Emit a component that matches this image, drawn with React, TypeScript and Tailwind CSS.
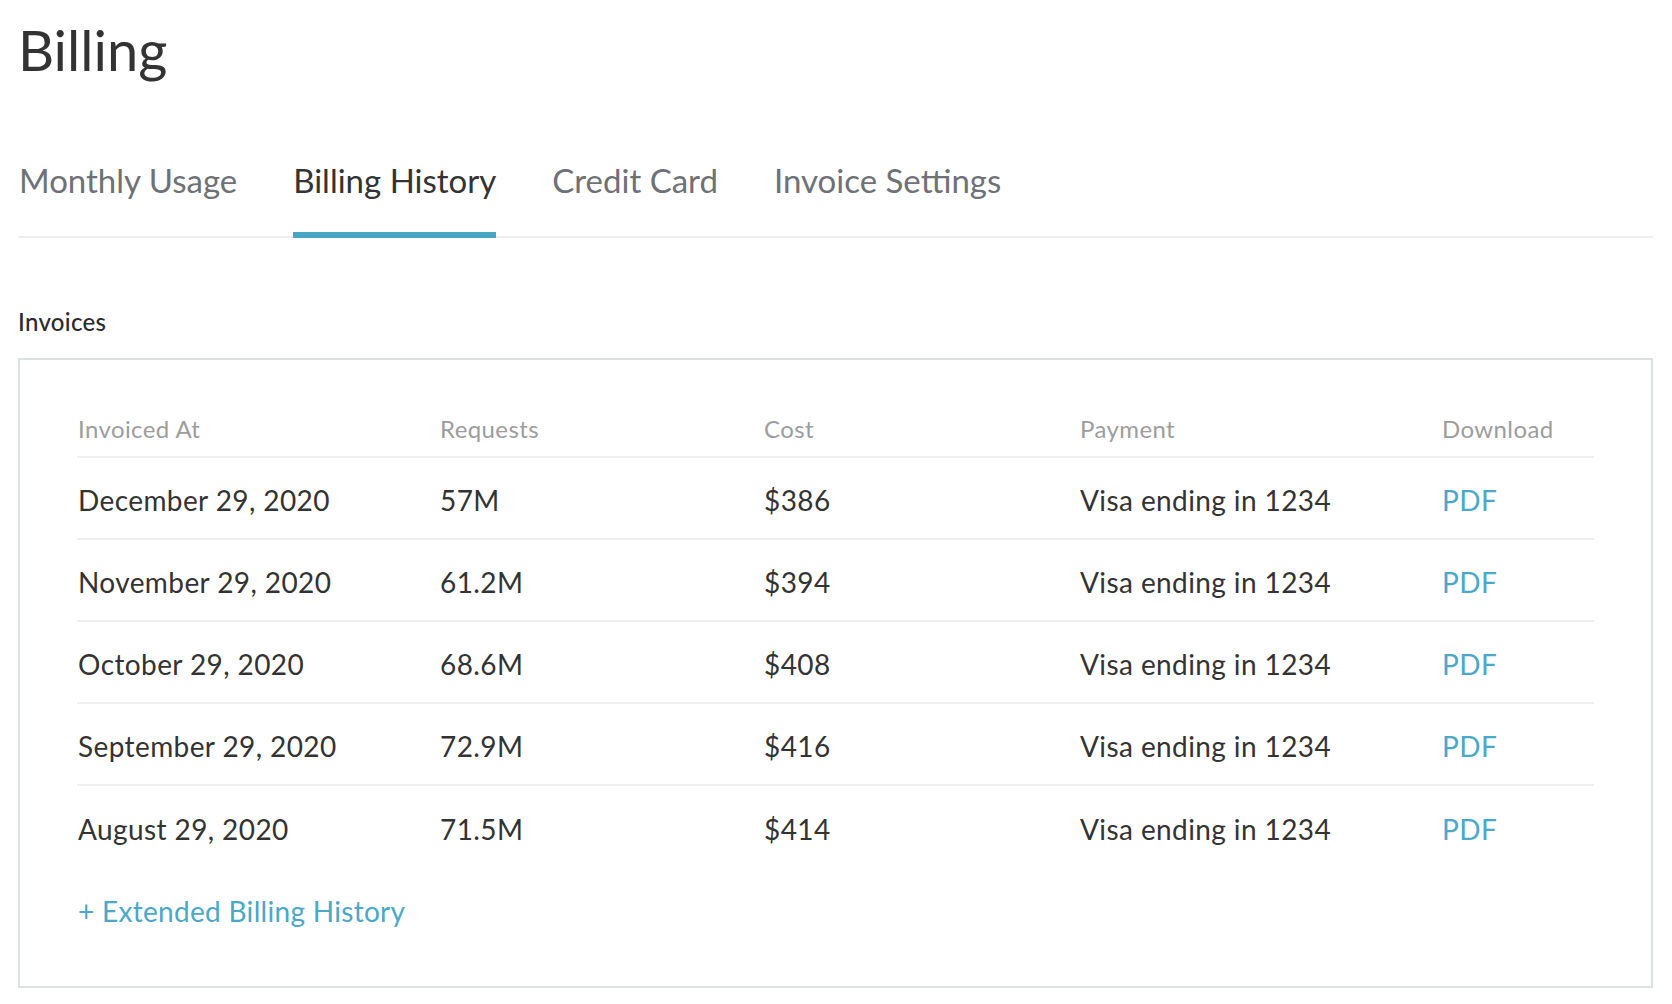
import React, { useState } from 'react'

const tabs = ['Monthly Usage', 'Billing History', 'Credit Card', 'Invoice Settings']

const invoices = [
    { date: 'December 29, 2020', requests: '57M', cost: '$386', payment: 'Visa ending in 1234' },
    { date: 'November 29, 2020', requests: '61.2M', cost: '$394', payment: 'Visa ending in 1234' },
    { date: 'October 29, 2020', requests: '68.6M', cost: '$408', payment: 'Visa ending in 1234' },
    { date: 'September 29, 2020', requests: '72.9M', cost: '$416', payment: 'Visa ending in 1234' },
    { date: 'August 29, 2020', requests: '71.5M', cost: '$414', payment: 'Visa ending in 1234' },
]

const cols = 'grid grid-cols-[363px_324px_316px_362px_1fr]'

export default function App() {
    const [active, setActive] = useState('Billing History')

    return (
        <div className='min-h-screen bg-white pl-[18px] pr-[19px] font-["Lato",sans-serif] text-[#333]'>
            <h1 className='pt-[18px] text-[56px] leading-[64px] text-[#333]'>Billing</h1>

            <nav className='mt-[79px] flex gap-[56px] border-b-2 border-[#efefef] pl-px'>
                {tabs.map((t) => (
                    <button
                        key={t}
                        onClick={() => setActive(t)}
                        className={
                            t === active
                                ? '-mb-[2px] border-b-[6px] border-[#47a6c1] pb-[33px] text-[33px] leading-[38px] text-[#333]'
                                : '-mb-[2px] border-b-[6px] border-transparent pb-[33px] text-[33px] leading-[38px] text-[#6e7175]'
                        }
                    >
                        {t}
                    </button>
                ))}
            </nav>

            <h2 className='mt-[70px] text-[24px] leading-[28px] font-medium tracking-[0.3px] text-[#2b2b2b]'>Invoices</h2>

            <section className='mt-[22px] border-2 border-[#dde1e0] px-[57px] pt-[55px] pb-[58px]'>
                <div className={`${cols} border-b-2 border-[#efefef] pb-[13px] text-[24px] leading-[28px] tracking-[0.4px] text-[#9d9d9d]`}>
                    <span className='pl-px'>Invoiced At</span>
                    <span>Requests</span>
                    <span>Cost</span>
                    <span>Payment</span>
                    <span>Download</span>
                </div>
                {invoices.map((inv, i) => (
                    <div
                        key={inv.date}
                        className={`${cols} h-[82px] items-center pt-1 text-[28px] tracking-[0.4px] text-[#333] ${i < invoices.length - 1 ? 'border-b-2 border-[#efefef]' : ''}`}
                    >
                        <span className='pl-px'>{inv.date}</span>
                        <span>{inv.requests}</span>
                        <span>{inv.cost}</span>
                        <span>{inv.payment}</span>
                        <a className='text-[#4aa8c8]' href='#'>PDF</a>
                    </div>
                ))}
                <a href='#' className='mt-[26px] block pl-px text-[28px] leading-[34px] tracking-[0.3px] text-[#4aa8c8]'>
                    + Extended Billing History
                </a>
            </section>
        </div>
    )
}
